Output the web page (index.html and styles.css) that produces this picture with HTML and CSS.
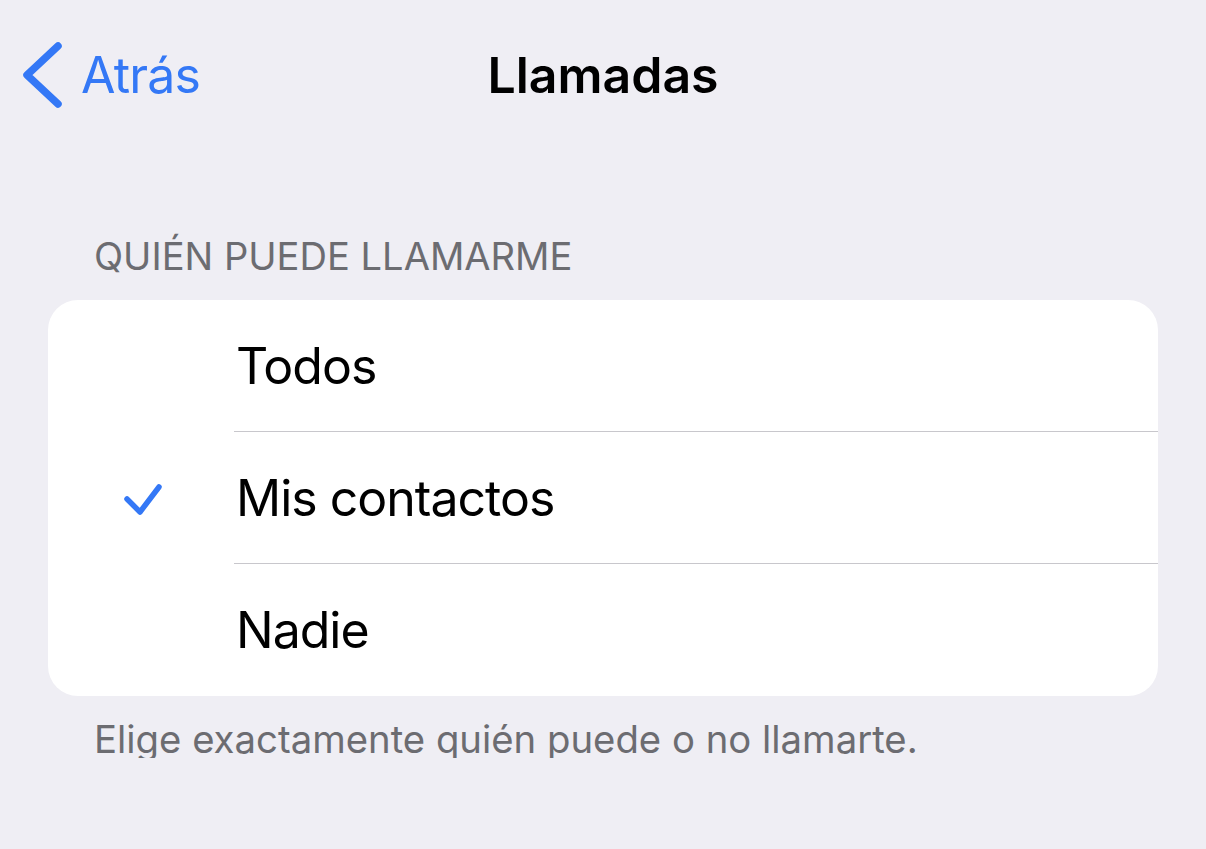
FILE: index.html
```html
<!DOCTYPE html>
<html lang="es">
<head>
<meta charset="UTF-8">
<meta name="viewport" content="width=device-width, initial-scale=1.0">
<title>Llamadas</title>
<link rel="stylesheet" href="styles.css">
</head>
<body>
    <div class="navbar">
        <a class="back" href="#">
            <svg class="chevron" width="44" height="70" viewBox="0 0 44 70">
                <polyline points="38,6 7,35 38,64" fill="none" stroke="#3478f6" stroke-width="7.5" stroke-linecap="round" stroke-linejoin="round"/>
            </svg>
            <span>Atrás</span>
        </a>
        <div class="title">Llamadas</div>
        <div></div>
    </div>

    <div class="section-header">QUIÉN PUEDE LLAMARME</div>
    <div class="card">
        <div class="row">
            <div class="check"></div>
            <div class="label">Todos</div>
        </div>
        <div class="row">
            <div class="check">
                <svg width="48" height="36" viewBox="0 0 48 36">
                    <polyline points="8,19 21,32 40,7" fill="none" stroke="#3478f6" stroke-width="5.5" stroke-linecap="round" stroke-linejoin="round"/>
                </svg>
            </div>
            <div class="label">Mis contactos</div>
        </div>
        <div class="row">
            <div class="check"></div>
            <div class="label last">Nadie</div>
        </div>
    </div>
    <div class="section-footer">Elige exactamente quién puede o no llamarte.</div>
</body>
</html>
```

FILE: styles.css
```css
body {
    margin: 0;
    font-family: Inter, "Noto Sans", sans-serif;
    background-color: #efeef4;
    color: #000;
}
.navbar {
    height: 150px;
    display: grid;
    grid-template-columns: 1fr auto 1fr;
    align-items: center;
}
.back {
    display: flex;
    align-items: center;
    gap: 17px;
    padding-left: 20px;
    color: #3478f6;
    text-decoration: none;
    font-size: 50px;
    line-height: 1;
    letter-spacing: -0.8px;
}
.chevron {
    display: block;
}
.title {
    font-size: 50px;
    font-weight: 600;
    line-height: 1;
}
.section-header {
    margin: 87px 0 25px 94px;
    font-size: 38.1px;
    line-height: 1;
    color: #6c6c71;
}
.card {
    margin: 0 48px;
    background-color: #fff;
    border-radius: 30px;
    overflow: hidden;
}
.row {
    display: flex;
    height: 132px;
}
.check {
    width: 115px;
    padding-left: 71px;
    display: flex;
    align-items: center;
}
.label {
    flex: 1;
    display: flex;
    align-items: center;
    padding-left: 2px;
    font-size: 50px;
    line-height: 1;
    letter-spacing: -1px;
    border-bottom: 1px solid #c8c7cc;
}
.label.last {
    border-bottom: none;
}
.section-footer {
    margin: 24px 0 0 94px;
    font-size: 38.3px;
    line-height: 1;
    color: #6c6c71;
}
```
